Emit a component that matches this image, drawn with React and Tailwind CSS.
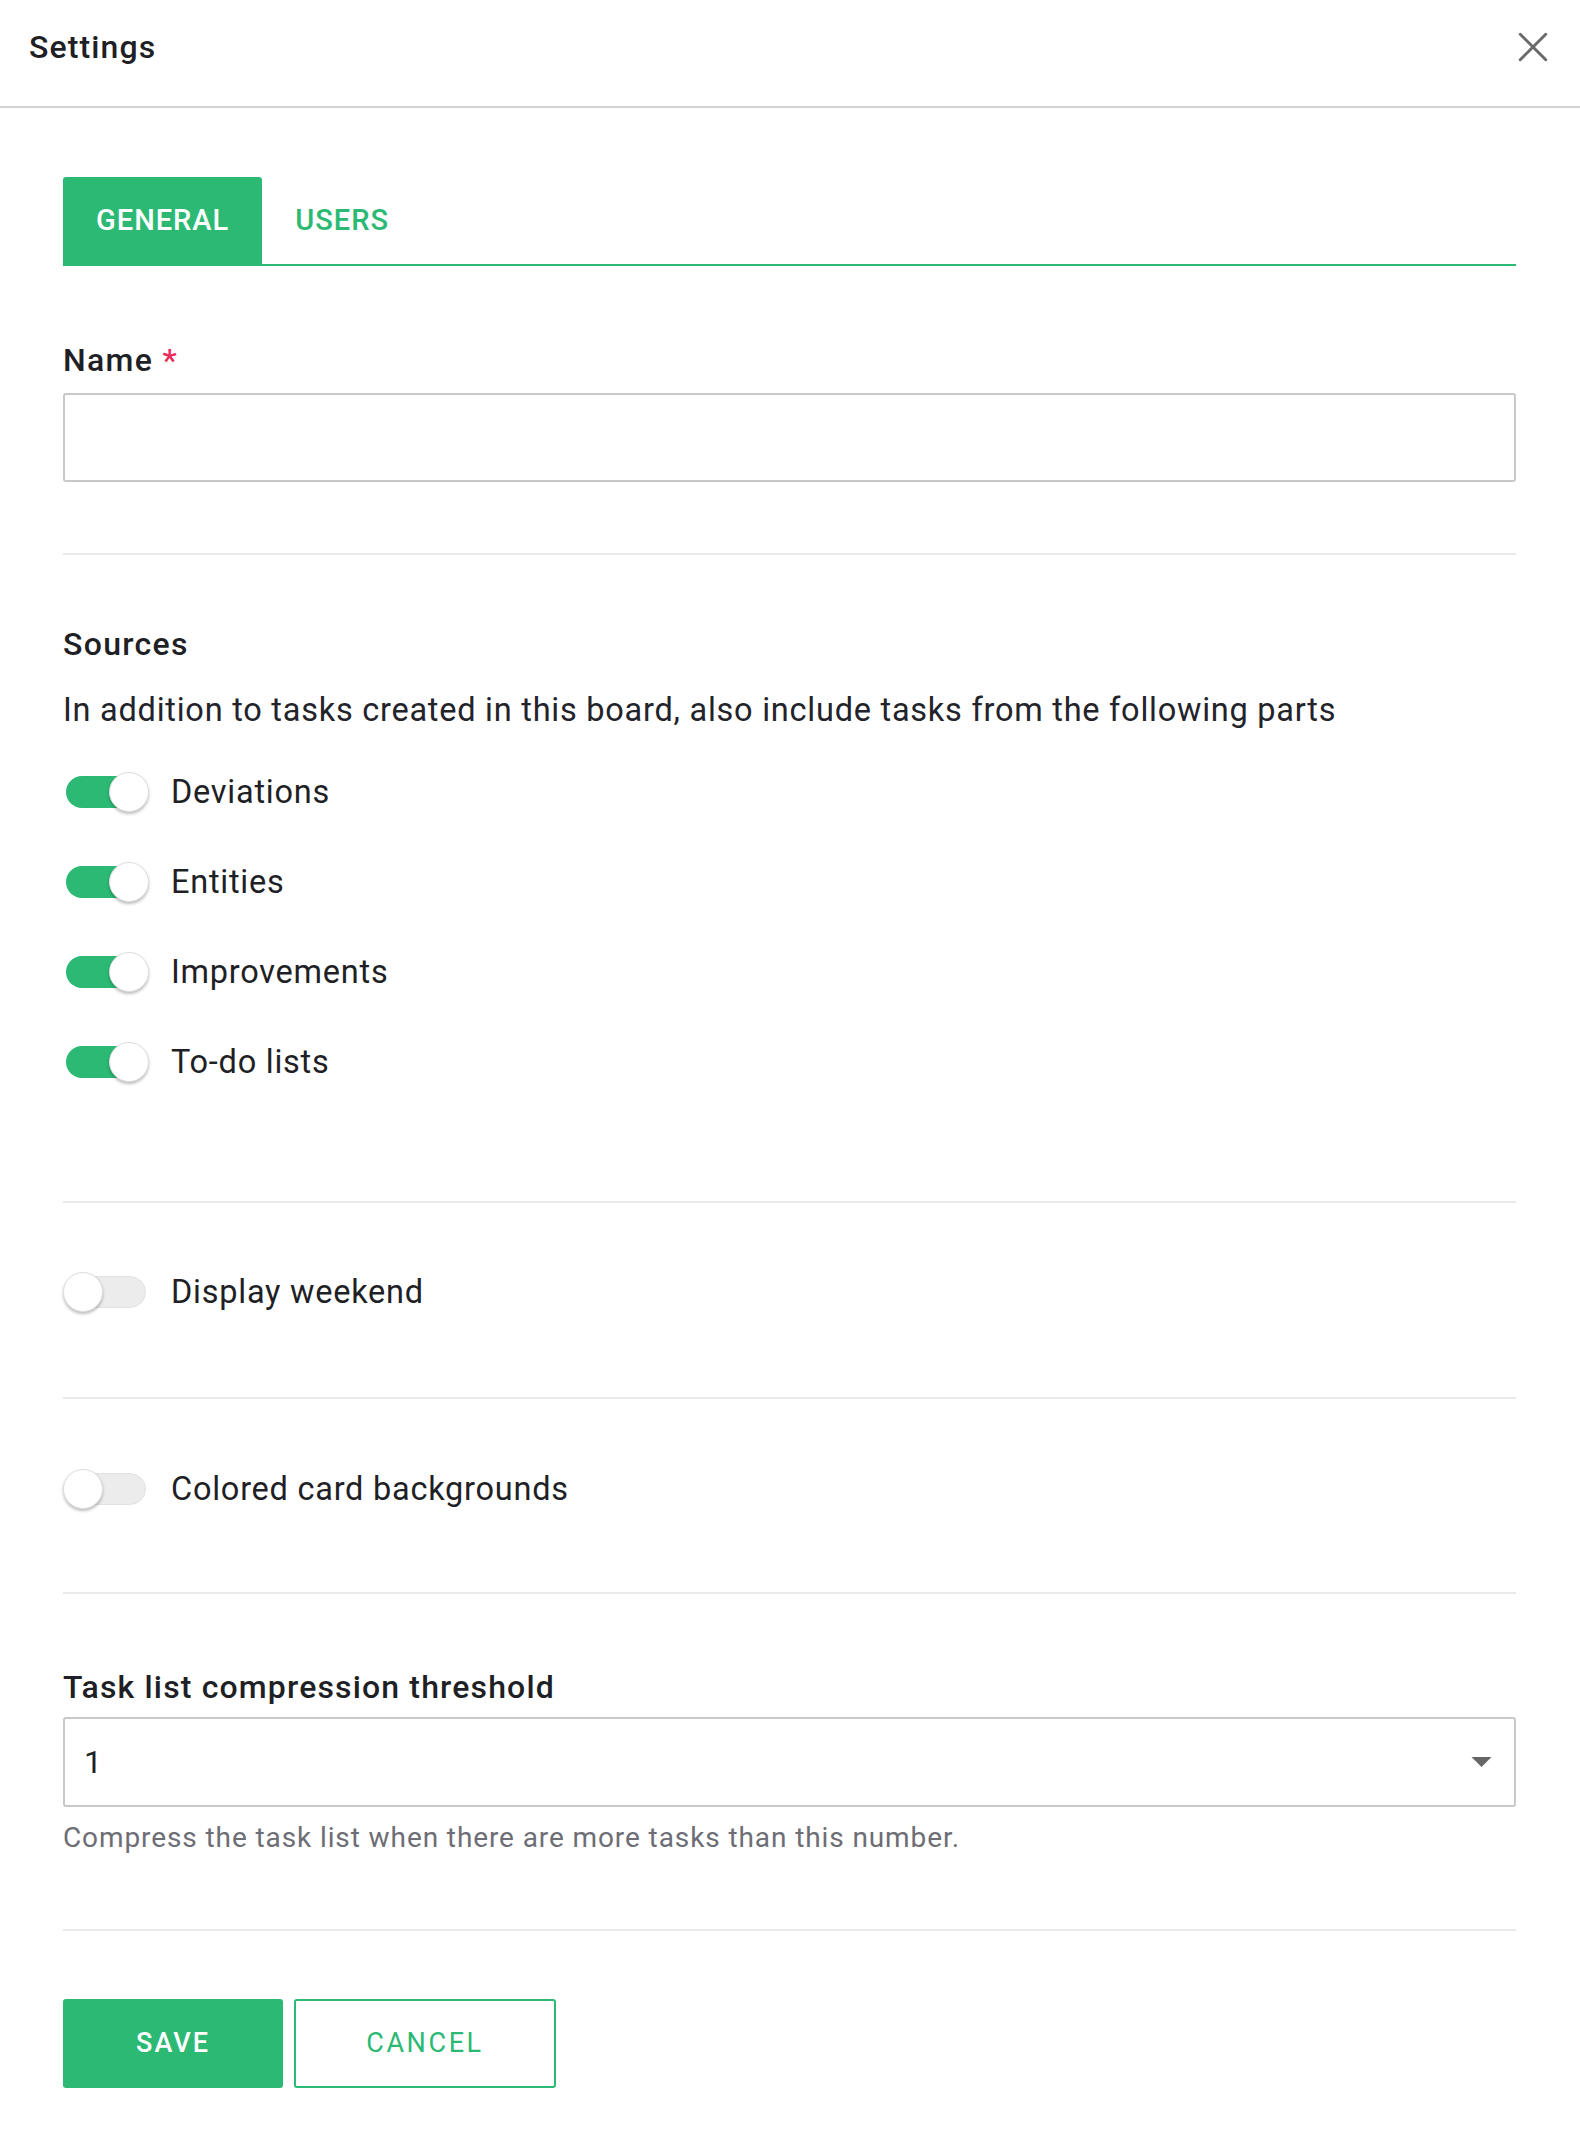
import { useState } from "react";

const GREEN = "bg-[#2bb974]";

function Toggle({ on, onChange }) {
    return (
        <button
            type="button"
            onClick={onChange}
            className="relative w-[86px] h-[42px] flex items-center shrink-0 cursor-pointer"
        >
            <span
                className={`mx-[3px] h-[32px] w-[80px] rounded-full ${
                    on ? "bg-[#2bb974]" : "bg-[#ececec] border border-[#e2e2e2]"
                }`}
            />
            <span
                className={`absolute top-[1px] h-[40px] w-[40px] rounded-full bg-white border border-[#dedede] shadow-[0_2px_3px_rgba(0,0,0,0.25)] ${
                    on ? "right-0" : "left-0"
                }`}
            />
        </button>
    );
}

function ToggleRow({ label, on, onChange }) {
    return (
        <div className="h-[90px] flex items-center gap-[22px]">
            <Toggle on={on} onChange={onChange} />
            <span className="text-[32.5px] tracking-[0.75px] text-[#1f1f26]">{label}</span>
        </div>
    );
}

function Divider({ className }) {
    return <div className={`h-[2px] bg-[#e9e9e9] ${className}`} />;
}

export default function App() {
    const [tab, setTab] = useState("general");
    const [sources, setSources] = useState({
        Deviations: true,
        Entities: true,
        Improvements: true,
        "To-do lists": true,
    });
    const [weekend, setWeekend] = useState(false);
    const [colored, setColored] = useState(false);

    return (
        <div className="min-h-screen bg-white font-['Roboto',sans-serif] text-[#1f1f26]">
            {/* header */}
            <div className="h-[108px] pb-[12px] pl-[29px] pr-[30px] flex items-center justify-between border-b-2 border-[#d2d2d2]">
                <h1 className="text-[32px] font-medium tracking-[1.1px]">Settings</h1>
                <button className="w-[34px] h-[34px] text-[#6a6a6a] cursor-pointer">
                    <svg viewBox="0 0 24 24" className="w-full h-full" fill="none" stroke="currentColor" strokeWidth="2.1" strokeLinecap="round">
                        <path d="M3 3L21 21M21 3L3 21" />
                    </svg>
                </button>
            </div>

            <div className="pl-[63px] pr-[64px] pt-[69px]">
                {/* tabs */}
                <div className="flex border-b-2 border-[#2bb974]">
                    {[
                        ["general", "GENERAL"],
                        ["users", "USERS"],
                    ].map(([key, text]) => (
                        <button
                            key={key}
                            onClick={() => setTab(key)}
                            className={`h-[87px] px-[33px] rounded-t-[3px] text-[29px] font-medium tracking-[1px] cursor-pointer ${
                                tab === key ? `${GREEN} text-white` : "text-[#2bb974]"
                            }`}
                        >
                            {text}
                        </button>
                    ))}
                </div>

                {/* name */}
                <label className="block mt-[76px] leading-[36px] text-[32px] font-medium tracking-[1.3px]">
                    Name <span className="text-[#ef2a5c]">*</span>
                </label>
                <input className="mt-[15px] w-full h-[89px] px-[24px] text-[31px] border-2 border-[#c8c8c8] rounded-[3px] outline-none" />

                <Divider className="mt-[71px]" />

                {/* sources */}
                <h2 className="mt-[71px] leading-[36px] text-[32px] font-medium tracking-[1.3px]">Sources</h2>
                <p className="mt-[30px] leading-[36px] text-[32.5px] tracking-[0.75px] text-[#23232a]">
                    In addition to tasks created in this board, also include tasks from the following parts
                </p>
                <div className="mt-[19px]">
                    {Object.keys(sources).map((name) => (
                        <ToggleRow
                            key={name}
                            label={name}
                            on={sources[name]}
                            onChange={() => setSources({ ...sources, [name]: !sources[name] })}
                        />
                    ))}
                </div>

                <Divider className="mt-[94px]" />

                <div className="mt-[44px]">
                    <ToggleRow label="Display weekend" on={weekend} onChange={() => setWeekend(!weekend)} />
                </div>

                <Divider className="mt-[60px]" />

                <div className="mt-[45px]">
                    <ToggleRow label="Colored card backgrounds" on={colored} onChange={() => setColored(!colored)} />
                </div>

                <Divider className="mt-[58px]" />

                {/* threshold */}
                <label className="block mt-[75px] leading-[36px] text-[32px] font-medium tracking-[1.15px]">
                    Task list compression threshold
                </label>
                <div className="mt-[12px] h-[90px] pl-[19px] pr-[22px] flex items-center justify-between border-2 border-[#c8c8c8] rounded-[3px]">
                    <span className="text-[32px]">1</span>
                    <svg viewBox="0 0 20 10" className="w-[21px] h-[10px] text-[#666]">
                        <path d="M0 0H20L10 10Z" fill="currentColor" />
                    </svg>
                </div>
                <p className="mt-[15px] leading-[32px] text-[28px] tracking-[0.9px] text-[#6d6d75]">
                    Compress the task list when there are more tasks than this number.
                </p>

                <Divider className="mt-[75px]" />

                {/* actions */}
                <div className="mt-[68px] flex gap-[11px]">
                    <button className="w-[220px] h-[89px] rounded-[3px] bg-[#2bb974] text-white text-[27px] font-medium tracking-[2px] cursor-pointer">
                        SAVE
                    </button>
                    <button className="w-[262px] h-[89px] rounded-[3px] border-2 border-[#2bb974] text-[#2bb974] text-[27px] tracking-[2.6px] cursor-pointer">
                        CANCEL
                    </button>
                </div>
            </div>
        </div>
    );
}
